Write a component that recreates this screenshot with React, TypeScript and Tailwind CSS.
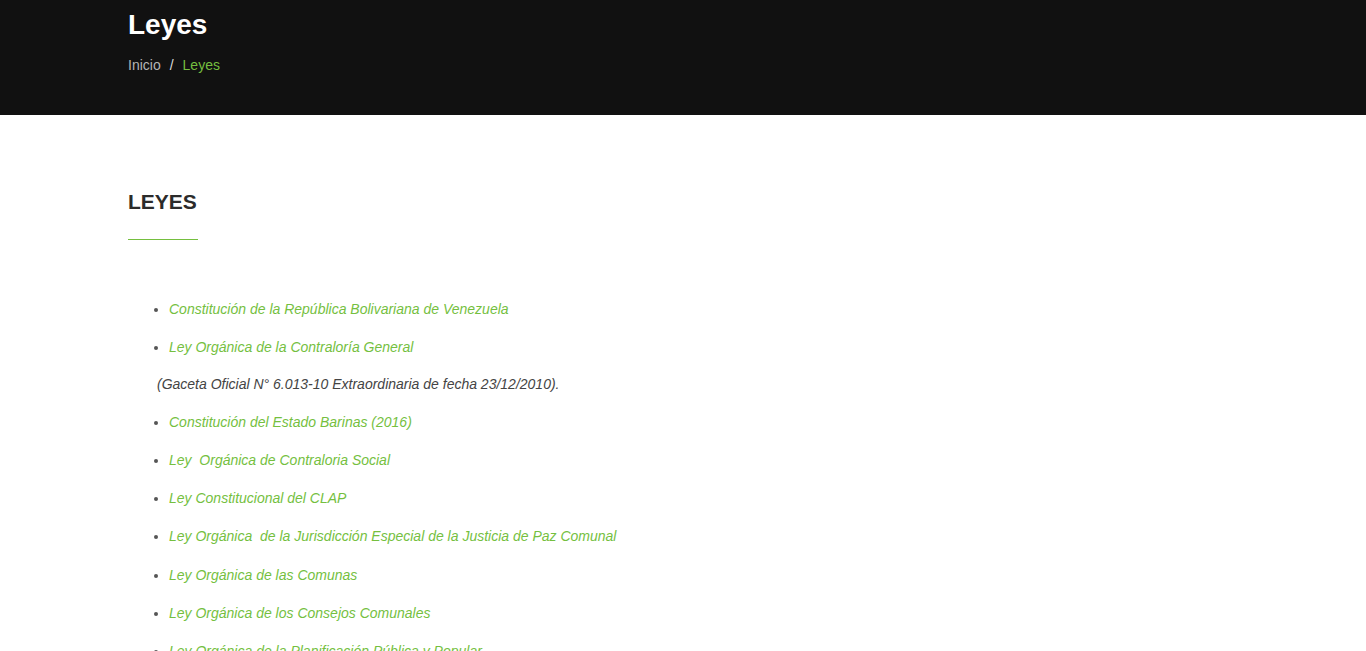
import React from 'react';

const leyes: { title: string; note?: string }[] = [
  { title: 'Constitución de la República Bolivariana de Venezuela' },
  {
    title: 'Ley Orgánica de la Contraloría General',
    note: '(Gaceta Oficial N° 6.013-10 Extraordinaria de fecha 23/12/2010).',
  },
  { title: 'Constitución del Estado Barinas (2016)' },
  { title: 'Ley\u00a0 Orgánica de Contraloria Social' },
  { title: 'Ley Constitucional del CLAP' },
  { title: 'Ley Orgánica\u00a0 de la Jurisdicción Especial de la Justicia de Paz Comunal' },
  { title: 'Ley Orgánica de las Comunas' },
  { title: 'Ley Orgánica de los Consejos Comunales' },
  { title: 'Ley Orgánica de la Planificación Pública y Popular' },
  { title: 'Ley Orgánica del Poder Popular' },
];

export default function App() {
  return (
    <div className="min-h-screen bg-white font-['Liberation_Sans',Arial,sans-serif]">
      <header className="h-[115px] bg-[#111111]">
        <div className="pl-[128px] pt-[8px]">
          <h1 className="text-[28px] leading-[34px] font-bold text-white">Leyes</h1>
          <nav className="mt-[13px] flex items-center text-[14px] leading-5">
            <span className="text-[#b5b5b5]">Inicio</span>
            <span className="mx-[9px] text-[#dddddd]">/</span>
            <span className="text-[#75bf3f]">Leyes</span>
          </nav>
        </div>
      </header>

      <main className="pl-[128px] pt-[74px]">
        <h2 className="text-[21px] leading-[25px] font-bold text-[#2b2b2b]">LEYES</h2>
        <div className="mt-[25px] h-px w-[70px] bg-[#75bf3f]" />

        <ul className="mt-[59px] list-disc pl-[41px] text-[14px] leading-5 text-[#555555]">
          {leyes.map((ley) => (
            <React.Fragment key={ley.title}>
              <li className="mb-[18.25px]">
                <a href="#" className="italic text-[#75bf3f]">
                  {ley.title}
                </a>
              </li>
              {ley.note && (
                <p className="-ml-[12px] -mt-[2px] mb-[18px] italic text-[#444444]">{ley.note}</p>
              )}
            </React.Fragment>
          ))}
        </ul>
      </main>
    </div>
  );
}
